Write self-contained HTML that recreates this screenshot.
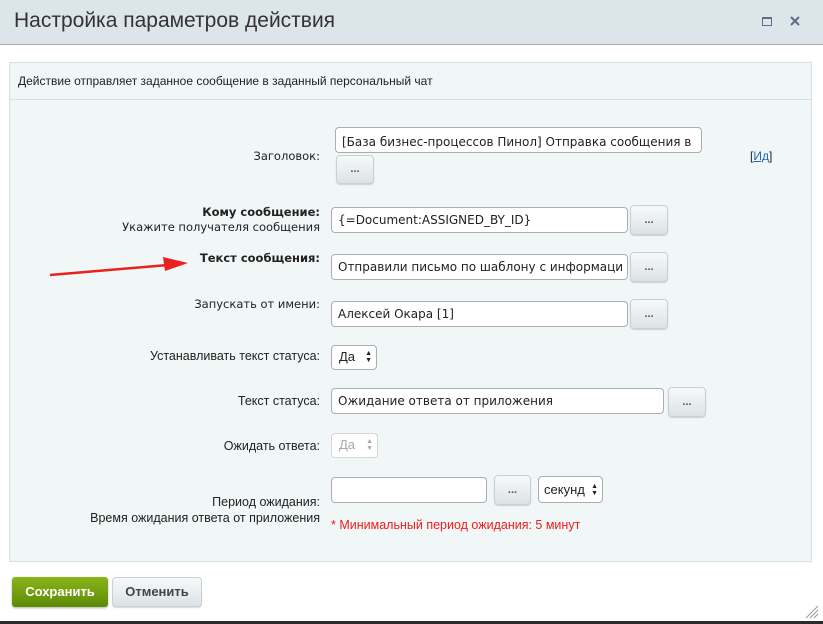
<!DOCTYPE html>
<html><head><meta charset="utf-8"><style>
*{box-sizing:border-box;margin:0;padding:0}
body{width:823px;height:624px;background:#fff;position:relative;overflow:hidden;font-family:"Liberation Sans",Arial,sans-serif;color:#222}
.a{position:absolute}
.hd{left:0;top:0;width:823px;height:45px;background:#dce5ea;border-bottom:1px solid #a9aeb2}
.ttl{left:14px;top:9px;font-size:21px;color:#333}
.panel{left:9px;top:62px;width:803px;height:500px;background:#f1f6f6;border:1px solid #d3e0e4}
.desc{left:9px;top:62px;width:803px;height:38px;border-bottom:1px solid #d3e0e4;font-size:12px;padding:12px 9px}
.lbl{right:503px;text-align:right;line-height:15px;white-space:nowrap;font-family:"DejaVu Sans",sans-serif;font-size:11.5px}
.lbl2{right:503px;font-size:12.5px;text-align:right;line-height:16px;white-space:nowrap}
.in{background:#fff;border:1px solid #a9aeb2;border-radius:4px;font-family:"DejaVu Sans",sans-serif;font-size:12px;padding:0 6px;line-height:24px;white-space:nowrap;overflow:hidden;height:26px}
.bt{border:1px solid #c9d0d3;border-radius:4px;background:linear-gradient(#f7f9f9,#dce3e6);font-size:11px;font-weight:bold;text-align:center;line-height:24px;color:#555;box-shadow:0 1px 1px rgba(0,0,0,.15)}
.sel{background:#fff;border:1px solid #a9aeb2;border-radius:4px;font-size:13px;padding-left:7px;line-height:22px;height:25px}
.sel i{position:absolute;right:4px;top:4px;font-style:normal;font-size:7px;line-height:7px}
</style></head><body>
<div class="a hd"></div>
<div class="a ttl">Настройка параметров действия</div>
<div class="a" style="left:762px;top:17px;width:10px;height:9px;border:1px solid #5c6e86;border-top-width:2px"></div>
<svg class="a" style="left:790px;top:16px" width="10" height="10"><path d="M1 1L9 9M9 1L1 9" stroke="#5c6e86" stroke-width="2"/></svg>
<div class="a panel"></div>
<div class="a desc">Действие отправляет заданное сообщение в заданный персональный чат</div>

<div class="a lbl" style="top:149px">Заголовок:</div>
<div class="a in" style="left:335px;top:127px;width:367px;height:26px;line-height:28px">[База бизнес-процессов Пинол] Отправка сообщения в</div>
<div class="a bt" style="left:336px;top:155px;width:38px;height:29px;line-height:27px">...</div>
<div class="a" style="left:750px;top:149px;font-size:12px">[<span style="color:#2067b0;text-decoration:underline">Ид</span>]</div>

<div class="a lbl" style="top:205px;text-align:right"><b>Кому сообщение:</b><br>Укажите получателя сообщения</div>
<div class="a in" style="left:331px;top:207px;width:297px">{=Document:ASSIGNED_BY_ID}</div>
<div class="a bt" style="left:630px;top:205px;width:38px;height:30px;line-height:28px">...</div>

<div class="a lbl" style="top:251px"><b>Текст сообщения:</b></div>
<div class="a in" style="left:331px;top:254px;width:297px">Отправили письмо по шаблону с информаци</div>
<div class="a bt" style="left:630px;top:252px;width:38px;height:30px;line-height:28px">...</div>

<div class="a lbl" style="top:297px">Запускать от имени:</div>
<div class="a in" style="left:331px;top:301px;width:297px">Алексей Окара [1]</div>
<div class="a bt" style="left:630px;top:299px;width:38px;height:30px;line-height:28px">...</div>

<div class="a lbl2" style="top:348px">Устанавливать текст статуса:</div>
<div class="a sel" style="left:331px;top:345px;width:46px">Да<i>▲<br>▼</i></div>

<div class="a lbl2" style="top:393px">Текст статуса:</div>
<div class="a in" style="left:331px;top:388px;width:333px">Ожидание ответа от приложения</div>
<div class="a bt" style="left:668px;top:387px;width:38px;height:30px;line-height:28px">...</div>

<div class="a lbl2" style="top:438px">Ожидать ответа:</div>
<div class="a sel" style="left:331px;top:433px;width:47px;color:#aaa;border-color:#d4d8da">Да<i>▲<br>▼</i></div>

<div class="a lbl2" style="top:494px">Период ожидания:<br>Время ожидания ответа от приложения</div>
<div class="a in" style="left:331px;top:477px;width:156px"></div>
<div class="a bt" style="left:494px;top:475px;width:37px;height:30px;line-height:28px">...</div>
<div class="a sel" style="left:538px;top:476px;width:65px;height:27px;line-height:25px;padding-left:5px">секунд<i style="top:6px">▲<br>▼</i></div>
<div class="a" style="left:331px;top:518px;font-size:12.5px;color:#f21b1b">* Минимальный период ожидания: 5 минут</div>

<svg class="a" style="left:0;top:0" width="823" height="624"><line x1="50" y1="275" x2="168" y2="265" stroke="#e8231f" stroke-width="2.5"/><polygon points="188,263 163,257 165,271" fill="#e8231f"/>
<g stroke="#999" stroke-width="1"><line x1="806" y1="618" x2="818" y2="606"/><line x1="810" y1="618" x2="818" y2="610"/><line x1="814" y1="618" x2="818" y2="614"/></g></svg>

<div class="a" style="left:12px;top:577px;width:96px;height:30px;border-radius:3px;background:linear-gradient(#8bb51a,#5d8a06);color:#fff;font-weight:bold;font-size:13px;text-align:center;line-height:30px;box-shadow:0 1px 2px rgba(0,0,0,.3)">Сохранить</div>
<div class="a bt" style="left:112px;top:577px;width:90px;height:30px;line-height:28px;font-size:13px;color:#444">Отменить</div>
<div class="a" style="left:0;top:621px;width:823px;height:3px;background:#262c30"></div>
</body></html>
